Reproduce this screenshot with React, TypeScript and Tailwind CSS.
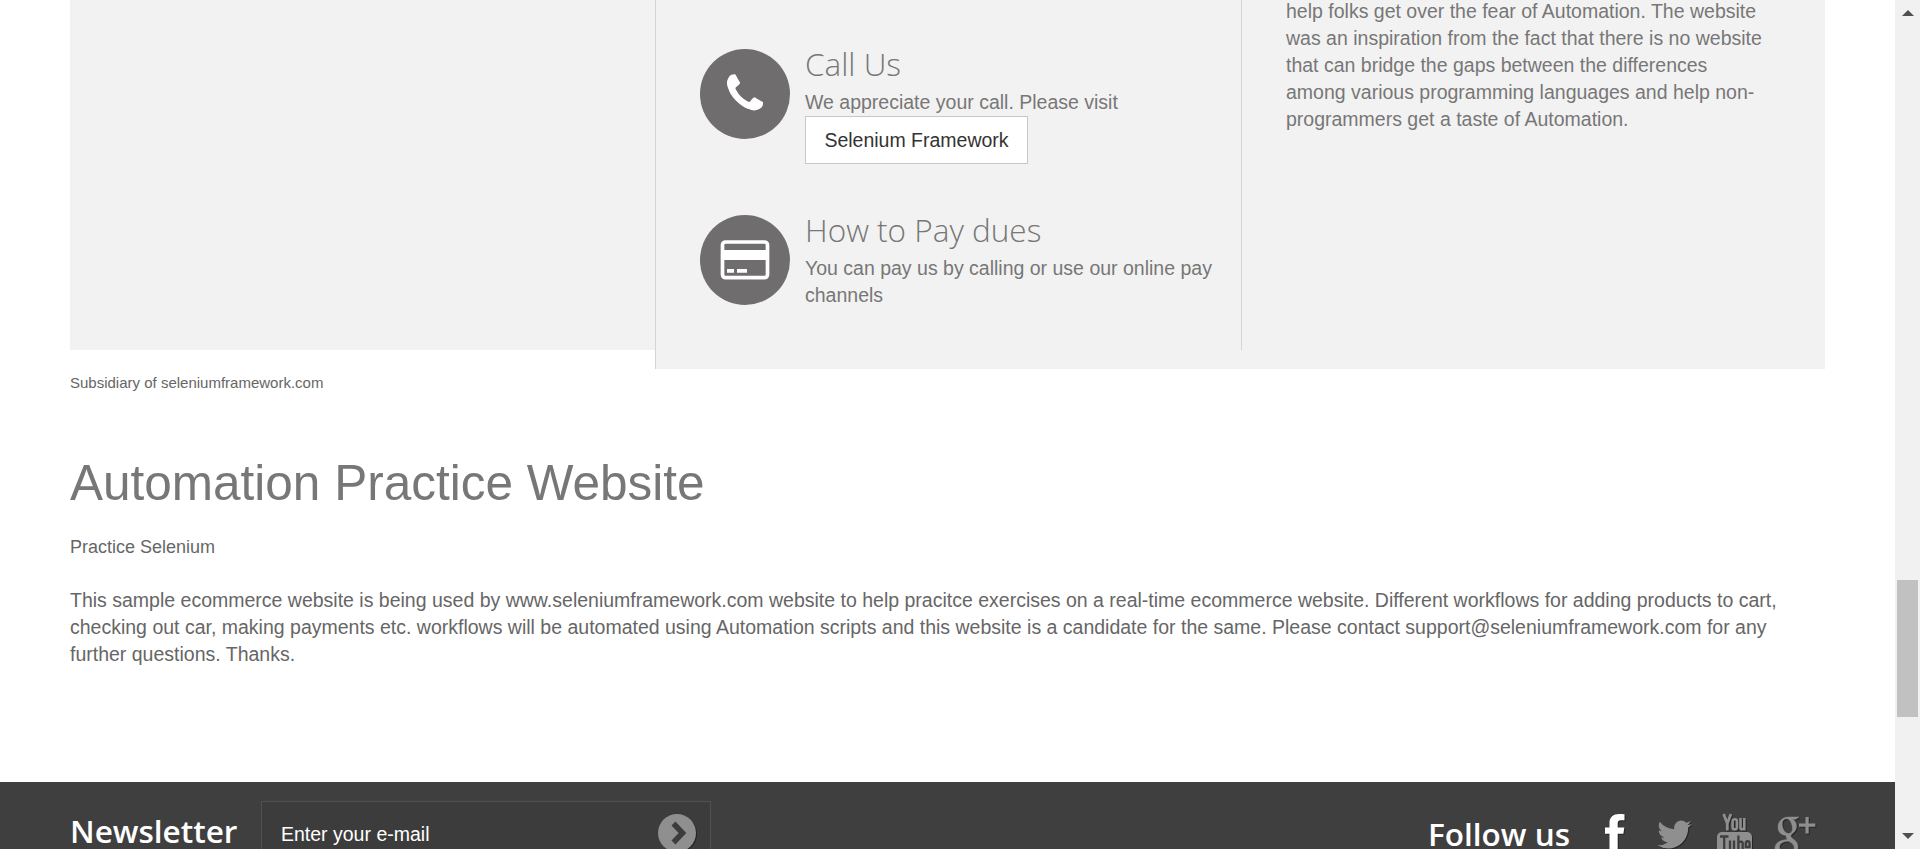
import React from "react";

function Phone() {
  return (
    <svg viewBox="0 0 1792 1792" className="h-[46px] w-[46px]" fill="currentColor">
      <path d="M1600 1240q0 27-10 70.5t-21 68.5q-21 50-122 106-94 51-186 51-27 0-52.5-3.5t-57.5-12.5-47.5-14.5-55.5-20.5-49-18q-98-35-175-83-128-79-264.5-215.5t-215.5-264.5q-48-77-83-175-3-9-18-49t-20.5-55.5-14.5-47.5-12.5-57.5-3.5-52.5q0-92 51-186 56-101 106-122 25-11 68.5-21t70.5-10q14 0 21 3 18 6 53 76 11 19 30 54t35 63.5 31 53.5q3 4 17.5 25t21.5 35.5 7 28.5q0 20-28.5 50t-62 55-62 53-28.5 46q0 9 5 22.5t8.5 20.5 14 24 11.5 19q76 137 174 235t235 174q2 1 19 11.5t24 14 20.5 8.5 22.5 5q18 0 46-28.5t53-62 55-62 50-28.5q14 0 28.5 7t35.5 21.5 25 17.5q25 15 53.5 31t63.5 35 54 30q70 35 76 53 3 7 3 21z" />
    </svg>
  );
}

function Card() {
  return (
    <svg viewBox="0 0 50 40" className="h-[40px] w-[50px]">
      <rect x="2.5" y="2" width="45" height="35.700" rx="3" fill="none" stroke="#fff" strokeWidth="3.700" />
      <path fill="#fff" d="M2 10h45v10H2zM7 29h7v3.700H7zM17 29h10v3.700H17z" />
    </svg>
  );
}

function Twitter() {
  return (
    <svg viewBox="0 0 1792 1792" className="mt-[12px] h-[39px] w-[39px] overflow-visible drop-shadow-[1px_1px_0_rgba(0,0,0,0.4)]" fill="#908f8f">
      <path d="M1684 408q-67 98-162 167 1 14 1 42 0 130-38 259.5t-115.5 248.5-184.5 210.5-258 146-323 54.5q-271 0-496-145 35 4 78 4 225 0 401-138-105-2-188-64.5t-114-159.5q33 5 61 5 43 0 85-11-112-23-185.500-111.500t-73.500-205.500v-4q68 38 146 41-66-44-105-115t-39-154q0-88 44-163 121 149 294.500 238.500t371.500 99.500q-8-38-8-74 0-134 94.500-228.500t228.500-94.500q140 0 236 102 109-21 205-78-37 115-142 178 93-10 186-50z" />
    </svg>
  );
}

export default function App() {
  return (
    <div className="flex h-[849px] w-[1920px] overflow-hidden bg-white font-['Liberation_Sans',Arial,sans-serif] text-[19.5px] leading-[27px] text-[#777]">
      <div className="flex w-[1895px] flex-col">
        <div className="flex h-[369px] items-start px-[70px]">
          <div className="h-[350px] w-[585px] bg-[#f2f2f2]" />
          <div className="h-[369px] w-[586px] border-l border-[#d6d4d4] bg-[#f2f2f2] pl-[44px] pt-[49px]">
            <div className="flex h-[166px] gap-[15px]">
              <div className="flex h-[90px] w-[90px] items-center justify-center rounded-full bg-[#6f6d6d] text-white">
                <Phone />
              </div>
              <div>
                <h3 className="h-[40px] font-['Open_Sans'] text-[31.5px] font-light leading-[30px]">Call Us</h3>
                <p>We appreciate your call. Please visit</p>
                <div className="flex h-[48px] w-[223px] items-center justify-center border border-[#c7c7c7] bg-white text-[#333]">Selenium Framework</div>
              </div>
            </div>
            <div className="flex gap-[15px]">
              <div className="flex h-[90px] w-[90px] shrink-0 items-center justify-center rounded-full bg-[#6f6d6d]">
                <Card />
              </div>
              <div>
                <h3 className="h-[40px] font-['Open_Sans'] text-[31.5px] font-light leading-[30px]">How to Pay dues</h3>
                <p className="whitespace-nowrap">You can pay us by calling or use our online pay<br />channels</p>
              </div>
            </div>
          </div>
          <div className="h-[369px] w-[584px] bg-[#f2f2f2]">
            <div className="-mt-[2px] h-[352px] border-l border-[#d6d4d4] pl-[44px]">
              <p className="whitespace-nowrap">
                help folks get over the fear of Automation. The website<br />
                was an inspiration from the fact that there is no website<br />
                that can bridge the gaps between the differences<br />
                among various programming languages and help non-<br />
                programmers get a taste of Automation.
              </p>
            </div>
          </div>
        </div>
        <main className="flex h-[413px] flex-col px-[70px] text-[#666]">
          <p className="text-[15px] leading-[27px]">Subsidiary of seleniumframework.com</p>
          <h1 className="mt-[57px] text-[49.5px] leading-[60px] text-[#777]">Automation Practice Website</h1>
          <p className="mt-[21px] text-[18px] leading-[27px]">Practice Selenium</p>
          <p className="mt-[26px] whitespace-nowrap">
            This sample ecommerce website is being used by www.seleniumframework.com website to help pracitce exercises on a real-time ecommerce website. Different workflows for adding products to cart,<br />
            checking out car, making payments etc. workflows will be automated using Automation scripts and this website is a candidate for the same. Please contact support@seleniumframework.com for any<br />
            further questions. Thanks.
          </p>
        </main>
        <footer className="flex h-[67px] items-start overflow-hidden bg-[#3f3f3f] px-[70px] text-white">
          <h4 className="mt-[30px] w-[191px] font-['Open_Sans'] text-[31.5px] font-semibold leading-[37px]">Newsletter</h4>
          <div className="mt-[19px] flex h-[67px] w-[450px] items-start justify-between border border-[#515151] bg-[#3c3c3c] pl-[19px] pr-[14px]">
            <span className="mt-[19px]">Enter your e-mail</span>
            <svg viewBox="0 0 38 38" className="mt-[12px] h-[38px] w-[38px] overflow-visible drop-shadow-[1px_1px_0_rgba(0,0,0,0.4)]">
              <circle cx="19" cy="19" r="19" fill="#908f8f" />
              <path d="m15.500 9.500 9 9.500-9 9.500" fill="none" stroke="#3c3c3c" strokeWidth="5.500" />
            </svg>
          </div>
          <h4 className="ml-auto mt-[36px] font-['Open_Sans'] text-[31.5px] font-semibold leading-[31px]">Follow us</h4>
          <div className="ml-[35px] mt-[21px] flex w-[220px] items-start">
            <svg viewBox="0 0 20 38" className="mt-[11px] h-[38px] w-[20px] overflow-visible drop-shadow-[1px_1px_0_rgba(0,0,0,0.4)]">
              <path fill="#fff" d="M19.500.3v6h-3.600c-2.700 0-3.200 1.300-3.200 3.200v4h6.600l-.9 6.300h-5.700V37H4.500V19.800H0v-6.300h4.500V8.600C4.500 3 8.500 0 14 0c2.300 0 4.300.1 5.500.3z" />
            </svg>
            <div className="ml-[30px]"><Twitter /></div>
            <svg viewBox="0 0 36 40" className="ml-[23px] mt-[11px] h-[40px] w-[36px] overflow-visible drop-shadow-[1px_1px_0_rgba(0,0,0,0.4)]" fill="none" stroke="#908f8f">
              <path strokeWidth="2.800" d="M6.700 0l3.600 9.500L13.900 0M10.300 9v7.500" />
              <path strokeWidth="2.600" d="M17.800 5.200c-1.600 0-2.200 1-2.200 2.500v5.200c0 1.600.6 2.500 2.200 2.500s2.200-.9 2.200-2.500V7.700c0-1.500-.6-2.500-2.200-2.500zM23.500 4v9.800c0 2.300 2 1.700 3.800.2M27.300 4v12.500" />
              <rect x="0" y="18" width="35" height="24" rx="5" fill="#908f8f" stroke="none" />
              <path stroke="#3f3f3f" strokeWidth="2.300" d="M3 22.500h8.500M7.200 22.500v16M13 26.500v9c0 2.500 2 2 4 0M17 26.500v12M21.400 21.500v17M21.400 29c1.500-2 4.300-2 4.300.6v8M32.600 33h-3.800v-3.500c0-3 3.800-3 3.800 0z" />
            </svg>
            <svg viewBox="0 0 40 38" className="ml-[22px] mt-[14px] h-[38px] w-[40px] overflow-visible drop-shadow-[1px_1px_0_rgba(0,0,0,0.4)]" fill="#908f8f">
              <path fillRule="evenodd" stroke="#908f8f" strokeWidth="0.500" d="M13.500 0H24l-3.200 2.200h-3.200c2.500 1.600 3.900 4 3.900 7 0 3.300-1.700 5.300-3.700 7-1.500 1.200-2 1.900-2 2.900 0 1.100 1.100 2 2.300 2.900 2.800 2 4.900 4 4.900 7.700 0 4.500-4.300 8.300-11.500 8.300C4.200 38 0 35 0 31c0-3.200 2-5.600 5.300-7 2.200-.9 4.800-1.400 7.200-1.500-1-1.200-1.600-2.300-1.400-4.100C6.500 18.600 3 15 3 10.200 3 4.500 7.500 0 13.500 0zM11.300 1.700c-3 .2-4.500 2.700-4.100 6.300.5 4.500 3.200 8.600 6.500 8.500 3-.1 4.200-3 3.600-6.800-.7-4.500-2.700-8.200-6-8zM13.800 24.300C8.500 24.300 4.500 26.300 4.500 30c0 3.300 3.200 5.500 7.800 5.500s6.900-2 6.900-5c0-2.600-1.700-4-5.400-6.200z" />
              <path d="M30.500 0h3.200v6.600h6.600v3.200h-6.600v6.600h-3.200V9.800H24V6.600h6.500z" />
            </svg>
          </div>
        </footer>
      </div>
      <div className="flex w-[25px] flex-col items-center bg-[#f1f1f1]">
        <svg viewBox="0 0 12 6" className="mt-[10px] h-[6px] w-[12px]" fill="#505050"><path d="m0 6 6-6 6 6z" /></svg>
        <div className="mt-[564px] h-[137px] w-[21px] bg-[#c1c1c1]" />
        <svg viewBox="0 0 12 6" className="mb-[10px] mt-auto h-[6px] w-[12px]" fill="#505050"><path d="m0 0 6 6 6-6z" /></svg>
      </div>
    </div>
  );
}
